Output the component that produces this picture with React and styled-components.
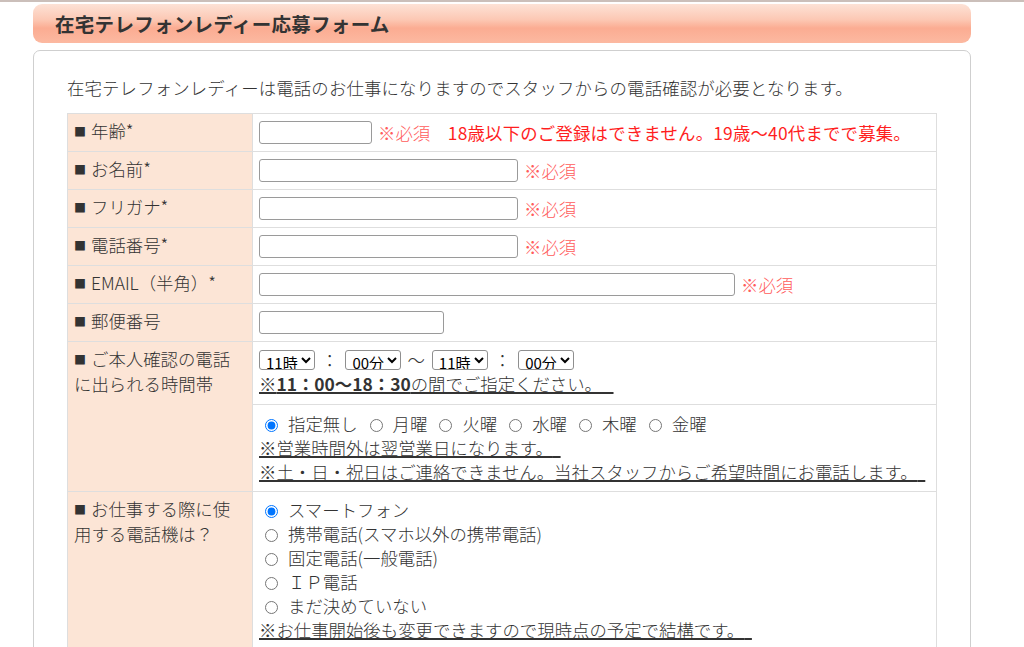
import React from "react";
import styled, { createGlobalStyle } from "styled-components";

const GlobalStyle = createGlobalStyle`
  html, body {
    margin: 0;
    padding: 0;
    background: #fff;
    overflow: hidden;
  }
  body {
    font-family: "Noto Sans CJK JP", "Noto Sans", sans-serif;
    color: #333;
  }
`;

const Page = styled.div`
  border-top: 2px solid #cbbfba;
  padding: 2px 0 0 33px;
`;

const Heading = styled.h2`
  box-sizing: border-box;
  width: 938px;
  height: 39px;
  margin: 0;
  padding-left: 22px;
  display: flex;
  align-items: center;
  border-radius: 9px;
  background: linear-gradient(#fde2d6 0%, #fcc8b4 40%, #fbac92 62%, #fcb9a1 100%);
  font-size: 19.5px;
  letter-spacing: 0.3px;
  font-weight: bold;
  color: #333;
`;

const Card = styled.div`
  box-sizing: border-box;
  width: 938px;
  margin-top: 7px;
  padding: 25px 33px 20px;
  border: 1px solid #cfcfcf;
  border-radius: 7px;
  font-weight: 300;
`;

const Intro = styled.p`
  margin: 0 0 13px;
  font-size: 17.4px;
  letter-spacing: 0.15px;
  line-height: 24px;
`;

const FormTable = styled.div`
  display: grid;
  grid-template-columns: 185px 1fr;
  border-top: 1px solid #dedede;
  border-left: 1px solid #dedede;
  font-size: 17.4px;
  line-height: 24px;
`;

const Label = styled.div`
  grid-row: ${(p) => (p.$span ? `span ${p.$span}` : "auto")};
  background: #fce5d6;
  padding: 5px 8px 5px 6px;
  border-right: 1px solid #dedede;
  border-bottom: 1px solid #dedede;
`;

const Mark = styled.span`
  display: inline-block;
  width: 17px;
  font-size: 12px;
  font-weight: 400;
  vertical-align: 1px;
`;

const Cell = styled.div`
  padding: ${(p) => p.$pad || "6px"};
  border-right: 1px solid #dedede;
  border-bottom: 1px solid #dedede;
`;

const FieldLine = styled.div`
  display: flex;
  align-items: center;
  gap: 6px;
  min-height: 25px;
`;

const TextInput = styled.input`
  box-sizing: border-box;
  width: ${(p) => p.$w}px;
  height: 23px;
  margin: 0;
  padding: 0 4px;
  border: 1px solid #9a9a9a;
  border-radius: 3px;
  font-size: 14px;
`;

const Required = styled.span`
  color: #ff5c5c;
`;

const Warn = styled.span`
  color: #ff1f1f;
  font-weight: 400;
  letter-spacing: 0.2px;
`;

const SelectLine = styled.div`
  display: flex;
  align-items: center;
  height: 24px;
`;

const Select = styled.select`
  box-sizing: border-box;
  height: 20px;
  margin: 0;
  padding: 0 0 0 2px;
  font-family: "Noto Sans CJK JP", sans-serif;
  font-size: 15px;
  font-weight: 400;
  color: #000;
  background: #fff;
  border: 1px solid #8f8f8f;
  border-radius: 3px;
`;

const Sep = styled.span`
  margin: 0 7px 0 6px;
`;

const Note = styled.span`
  text-decoration: underline;
  text-decoration-thickness: 1.6px;
  text-decoration-color: #333;
`;

const Bold = styled.b`
  font-weight: bold;
  color: #333;
`;

const NoteLine = styled.div`
  line-height: 24px;
`;

const DayLine = styled.div`
  line-height: 24px;
`;

const Radio = styled.input.attrs({ type: "radio" })`
  width: 13px;
  height: 13px;
  margin: 0 10px 0 6px;
  vertical-align: -1px;
`;

const DayOption = styled.label`
  margin-right: 6px;
`;

const PhoneOption = styled.label`
  display: block;
  line-height: 24px;
`;

const hours = ["11時", "12時", "13時", "14時", "15時", "16時", "17時", "18時"];
const mins = ["00分", "30分"];
const days = ["指定無し", "月曜", "火曜", "水曜", "木曜", "金曜"];
const phones = [
  "スマートフォン",
  "携帯電話(スマホ以外の携帯電話)",
  "固定電話(一般電話)",
  "ＩＰ電話",
  "まだ決めていない",
];

function TimeSelect({ options }) {
  return (
    <Select defaultValue={options[0]}>
      {options.map((o) => (
        <option key={o}>{o}</option>
      ))}
    </Select>
  );
}

function FieldLabel({ children, span }) {
  return (
    <Label $span={span}>
      <Mark>■</Mark>
      {children}
    </Label>
  );
}

export default function App() {
  return (
    <Page>
      <GlobalStyle />
      <Heading>在宅テレフォンレディー応募フォーム</Heading>
      <Card>
        <Intro>
          在宅テレフォンレディーは電話のお仕事になりますのでスタッフからの電話確認が必要となります。
        </Intro>
        <FormTable>
          <FieldLabel>年齢*</FieldLabel>
          <Cell>
            <FieldLine>
              <TextInput $w={113} />
              <span>
                <Required>※必須</Required>
                <Warn>　18歳以下のご登録はできません。19歳～40代までで募集。</Warn>
              </span>
            </FieldLine>
          </Cell>

          <FieldLabel>お名前*</FieldLabel>
          <Cell>
            <FieldLine>
              <TextInput $w={259} />
              <Required>※必須</Required>
            </FieldLine>
          </Cell>

          <FieldLabel>フリガナ*</FieldLabel>
          <Cell>
            <FieldLine>
              <TextInput $w={259} />
              <Required>※必須</Required>
            </FieldLine>
          </Cell>

          <FieldLabel>電話番号*</FieldLabel>
          <Cell>
            <FieldLine>
              <TextInput $w={259} />
              <Required>※必須</Required>
            </FieldLine>
          </Cell>

          <FieldLabel>EMAIL（半角）*</FieldLabel>
          <Cell>
            <FieldLine>
              <TextInput $w={476} />
              <Required>※必須</Required>
            </FieldLine>
          </Cell>

          <FieldLabel>郵便番号</FieldLabel>
          <Cell>
            <FieldLine>
              <TextInput $w={185} />
            </FieldLine>
          </Cell>

          <FieldLabel span={2}>
            ご本人確認の電話
            <br />
            に出られる時間帯
          </FieldLabel>
          <Cell $pad="6px 6px 8px">
            <SelectLine>
              <TimeSelect options={hours} />
              <Sep>：</Sep>
              <TimeSelect options={mins} />
              <Sep>～</Sep>
              <TimeSelect options={hours} />
              <Sep>：</Sep>
              <TimeSelect options={mins} />
            </SelectLine>
            <NoteLine>
              <Note>
                ※<Bold>11：00～18：30</Bold>の間でご指定ください。{"\u00a0\u00a0\u00a0"}
              </Note>
            </NoteLine>
          </Cell>
          <Cell $pad="7px 6px">
            <DayLine>
              {days.map((d, i) => (
                <DayOption key={d}>
                  <Radio name="day" defaultChecked={i === 0} />
                  {d}
                </DayOption>
              ))}
            </DayLine>
            <NoteLine>
              <Note>※営業時間外は翌営業日になります。{"\u00a0\u00a0"}</Note>
            </NoteLine>
            <NoteLine>
              <Note>
                ※土・日・祝日はご連絡できません。当社スタッフからご希望時間にお電話します。{"\u00a0\u00a0"}
              </Note>
            </NoteLine>
          </Cell>

          <FieldLabel>
            お仕事する際に使
            <br />
            用する電話機は？
          </FieldLabel>
          <Cell>
            {phones.map((p, i) => (
              <PhoneOption key={p}>
                <Radio name="phone" defaultChecked={i === 0} />
                {p}
              </PhoneOption>
            ))}
            <NoteLine>
              <Note>※お仕事開始後も変更できますので現時点の予定で結構です。{"\u00a0\u00a0"}</Note>
            </NoteLine>
          </Cell>
        </FormTable>
      </Card>
    </Page>
  );
}
